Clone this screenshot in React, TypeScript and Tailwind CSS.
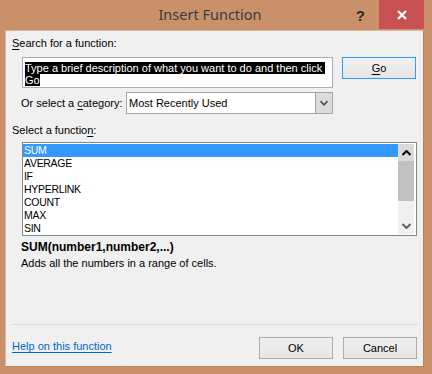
import React from 'react';

const functions = ['SUM', 'AVERAGE', 'IF', 'HYPERLINK', 'COUNT', 'MAX', 'SIN'];

const ui = { fontFamily: '"Liberation Sans", Arial, sans-serif' };

function Chevron({ up, className }: { up?: boolean; className?: string }) {
  return (
    <svg width="9" height="6" viewBox="0 0 9 6" className={className}>
      <path
        d={up ? 'M0.5 5 L4.5 1 L8.5 5' : 'M0.5 1 L4.5 5 L8.5 1'}
        fill="none"
        stroke="currentColor"
        strokeWidth="2"
      />
    </svg>
  );
}

export default function App() {
  return (
    <div className="w-[432px] h-[374px] bg-[#c8916a] flex flex-col overflow-hidden" style={ui}>
      {/* Title bar */}
      <div className="h-[30px] shrink-0 flex flex-row">
        <div className="flex-1" />
        <div
          className="pt-[4px] mr-[4px] text-[14.5px] text-[#3c3c3c]"
          style={{ fontFamily: '"Noto Sans", "Open Sans", sans-serif' }}
        >
          Insert Function
        </div>
        <div className="flex-1 flex flex-row justify-end items-start pr-[8px]">
          <span className="mt-[5px] mr-[14px] text-[15px] font-bold text-[#2a2a2a]">?</span>
          <div className="w-[45px] h-[29px] bg-[#c75050] flex items-center justify-center">
            <svg width="10" height="10" viewBox="0 0 10 10">
              <path d="M1 1 L9 9 M9 1 L1 9" stroke="#fff" strokeWidth="2.2" />
            </svg>
          </div>
        </div>
      </div>

      {/* Client area */}
      <div className="ml-[5px] mr-[8px] mb-[7px] flex-1 bg-[#f0f0f0] border border-[#b4825e] border-t-[#d9b79c] border-l-[#d9b79c] flex flex-col pl-[6px] pr-[6px] text-[11px] leading-[13px] text-black">
        <div className="pt-[6px]">
          <span className="underline underline-offset-2">S</span>earch for a function:
        </div>

        <div className="mt-[7px] flex flex-row items-start">
          <div className="ml-[10px] w-[311px] h-[31px] bg-white border border-[#abadb3] pt-[4px] pl-[2px] leading-[12px] whitespace-nowrap">
            <span className="bg-black text-white">
              Type a brief description of what you want to do and then click&nbsp;
              <br />
              Go
            </span>
          </div>
          <div className="ml-[9px] w-[74px] h-[22px] border border-[#3399ff] bg-gradient-to-b from-[#f0f0f0] to-[#e5e5e5] flex items-center justify-center">
            <span>
              <span className="underline underline-offset-2">G</span>o
            </span>
          </div>
        </div>

        <div className="mt-[4px] h-[22px] flex flex-row items-center">
          <div className="ml-[9px] w-[105px]">
            Or select a <span className="underline underline-offset-2">c</span>ategory:
          </div>
          <div className="w-[207px] h-[22px] bg-white border border-[#a5a5a5] flex flex-row">
            <div className="flex-1 pl-[2px] flex items-center">Most Recently Used</div>
            <div className="w-[17px] bg-[#dcdcdc] border-l border-[#a5a5a5] flex items-center justify-center text-[#555]">
              <Chevron className="w-[8px]" />
            </div>
          </div>
        </div>

        <div className="mt-[10px]">
          Select a functio<span className="underline underline-offset-2">n</span>:
        </div>

        {/* Function list */}
        <div className="mt-[5px] ml-[10px] w-[395px] h-[94px] bg-white border border-[#828790] pt-[1px] flex flex-row">
          <div className="flex-1 flex flex-col text-[10.5px] tracking-[-0.3px]">
            {functions.map((f, i) => (
              <div
                key={f}
                className={
                  i === 0
                    ? 'h-[13px] leading-[13px] pl-[1px] bg-[#3399ff] text-white'
                    : 'h-[13px] leading-[13px] pl-[1px]'
                }
              >
                {f}
              </div>
            ))}
          </div>
          <div className="w-[16px] mr-[2px] mb-[1px] bg-[#f0f0f0] flex flex-col">
            <div className="h-[17px] bg-[#dadada] flex items-center justify-center text-black">
              <Chevron up />
            </div>
            <div className="h-[40px] bg-[#c1c1c1]" />
            <div className="flex-1" />
            <div className="h-[17px] flex items-center justify-center text-[#606060]">
              <Chevron />
            </div>
          </div>
        </div>

        <div className="mt-[5px] ml-[9px] text-[12px] font-bold">SUM(number1,number2,...)</div>
        <div className="mt-[3px] ml-[9px]">Adds all the numbers in a range of cells.</div>

        {/* Footer */}
        <div className="mt-auto h-px bg-[#dadada] mr-[-1px]" />
        <div className="mt-[12px] mb-[7px] flex flex-row items-center">
          <span className="mb-[3px] text-[#0066cc] underline underline-offset-2">Help on this function</span>
          <div className="ml-auto w-[74px] h-[22px] border border-[#acacac] bg-gradient-to-b from-[#f0f0f0] to-[#e5e5e5] flex items-center justify-center">
            OK
          </div>
          <div className="ml-[10px] w-[74px] h-[22px] border border-[#acacac] bg-gradient-to-b from-[#f0f0f0] to-[#e5e5e5] flex items-center justify-center">
            Cancel
          </div>
        </div>
      </div>
    </div>
  );
}
